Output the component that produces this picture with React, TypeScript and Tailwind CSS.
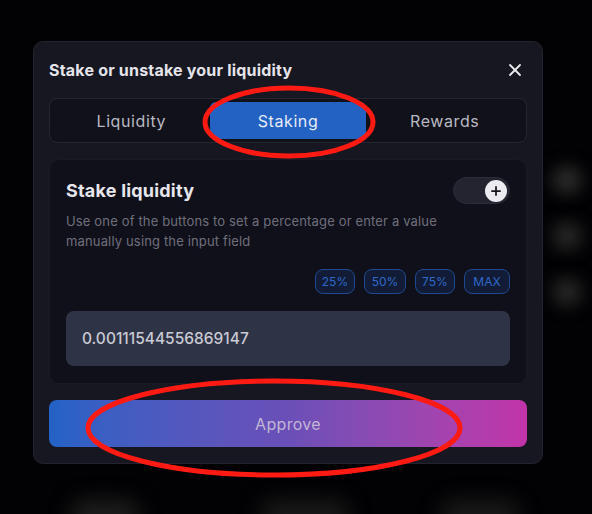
import { X, Plus } from 'lucide-react';

export default function App() {
  const font = { fontFamily: 'Inter, "Open Sans", sans-serif' };
  const presets = [
    { label: '25%', w: 'w-[40px]' },
    { label: '50%', w: 'w-[42px]' },
    { label: '75%', w: 'w-[40px]' },
    { label: 'MAX', w: 'w-[46px]' },
  ];

  return (
    <div className="relative w-[592px] h-[514px] overflow-hidden bg-[#020204]" style={font}>
      {/* faint blurred shapes behind the dialog */}
      <div className="absolute left-[552px] top-[166px] w-[30px] h-[28px] rounded-full bg-[#2a2a2a] blur-[8px]" />
      <div className="absolute left-[552px] top-[222px] w-[30px] h-[28px] rounded-full bg-[#262626] blur-[8px]" />
      <div className="absolute left-[552px] top-[278px] w-[30px] h-[28px] rounded-full bg-[#262626] blur-[8px]" />
      <div className="absolute left-[70px] top-[500px] w-[70px] h-[30px] rounded-full bg-[#1e1e1e] blur-[10px]" />
      <div className="absolute left-[260px] top-[500px] w-[90px] h-[30px] rounded-full bg-[#1a1a1a] blur-[10px]" />
      <div className="absolute left-[440px] top-[500px] w-[80px] h-[30px] rounded-full bg-[#1a1a1a] blur-[10px]" />

      <div className="relative ml-[33px] mt-[41px] w-[510px] rounded-[10px] border border-[#23232f] bg-[#171721] px-[15px] pt-[16px] pb-[16px]">
        <div className="flex items-center justify-between h-[24px]">
          <h2 className="text-[16px] font-bold text-[#e4e4ea] tracking-[0.2px]">Stake or unstake your liquidity</h2>
          <X className="w-[20px] h-[20px] text-[#e8e8ee] mr-[2px]" strokeWidth={2.2} />
        </div>

        <div className="mt-[16px] grid grid-cols-3 h-[45px] rounded-[8px] border border-[#262632] bg-[#111119] p-[3px]">
          <button className="rounded-[6px] text-[16px] tracking-[0.6px] text-[#b9b9c4]">Liquidity</button>
          <button className="rounded-[6px] text-[16px] tracking-[0.6px] text-[#e6ecf8] bg-[#2361c2]">Staking</button>
          <button className="rounded-[6px] text-[16px] tracking-[0.6px] text-[#b9b9c4]">Rewards</button>
        </div>

        <div className="mt-[16px] rounded-[10px] border border-[#1a1a25] bg-[#10101a] px-[16px] pt-[17px] pb-[17px]">
          <div className="flex items-center justify-between">
            <h3 className="text-[18px] font-bold tracking-[0.2px] text-[#e6e6ec]">Stake liquidity</h3>
            <div className="flex items-center justify-end w-[57px] h-[27px] rounded-full bg-[#242431] border border-[#2b2b3a] pr-[2px]">
              <div className="flex items-center justify-center w-[22px] h-[22px] rounded-full bg-[#ececf0]">
                <Plus className="w-[14px] h-[14px] text-[#15151d]" strokeWidth={3} />
              </div>
            </div>
          </div>
          <p className="mt-[7px] max-w-[420px] text-[13px] leading-[20px] tracking-[0.15px] text-[#6f6f7c]">
            Use one of the buttons to set a percentage or enter a value manually using the input field
          </p>
          <div className="mt-[18px] flex justify-end gap-[9px]">
            {presets.map((p) => (
              <button
                key={p.label}
                className={`${p.w} h-[25px] rounded-[8px] border border-[#1e4a92] bg-[#121c36] text-[12px] text-[#2f68c8]`}
              >
                {p.label}
              </button>
            ))}
          </div>
          <div className="mt-[17px] flex items-center h-[55px] rounded-[8px] bg-[#2f3346] px-[16px] text-[15.5px] font-medium text-[#c9cad3]">
            0.00111544556869147
          </div>
        </div>

        <button className="mt-[16px] w-full h-[47px] rounded-[8px] bg-gradient-to-r from-[#2262c6] via-[#6a4fb8] to-[#c233a9] text-[16px] tracking-[0.3px] text-[#c2b6d6]">
          Approve
        </button>
      </div>

      {/* red annotation ellipses */}
      <svg className="absolute left-0 top-0 pointer-events-none" width="592" height="514">
        <ellipse cx="289" cy="122" rx="84" ry="34" fill="none" stroke="#ff1a14" strokeWidth="5" />
        <ellipse cx="274" cy="428" rx="186" ry="47" fill="none" stroke="#ff1a14" strokeWidth="5" />
      </svg>
    </div>
  );
}
